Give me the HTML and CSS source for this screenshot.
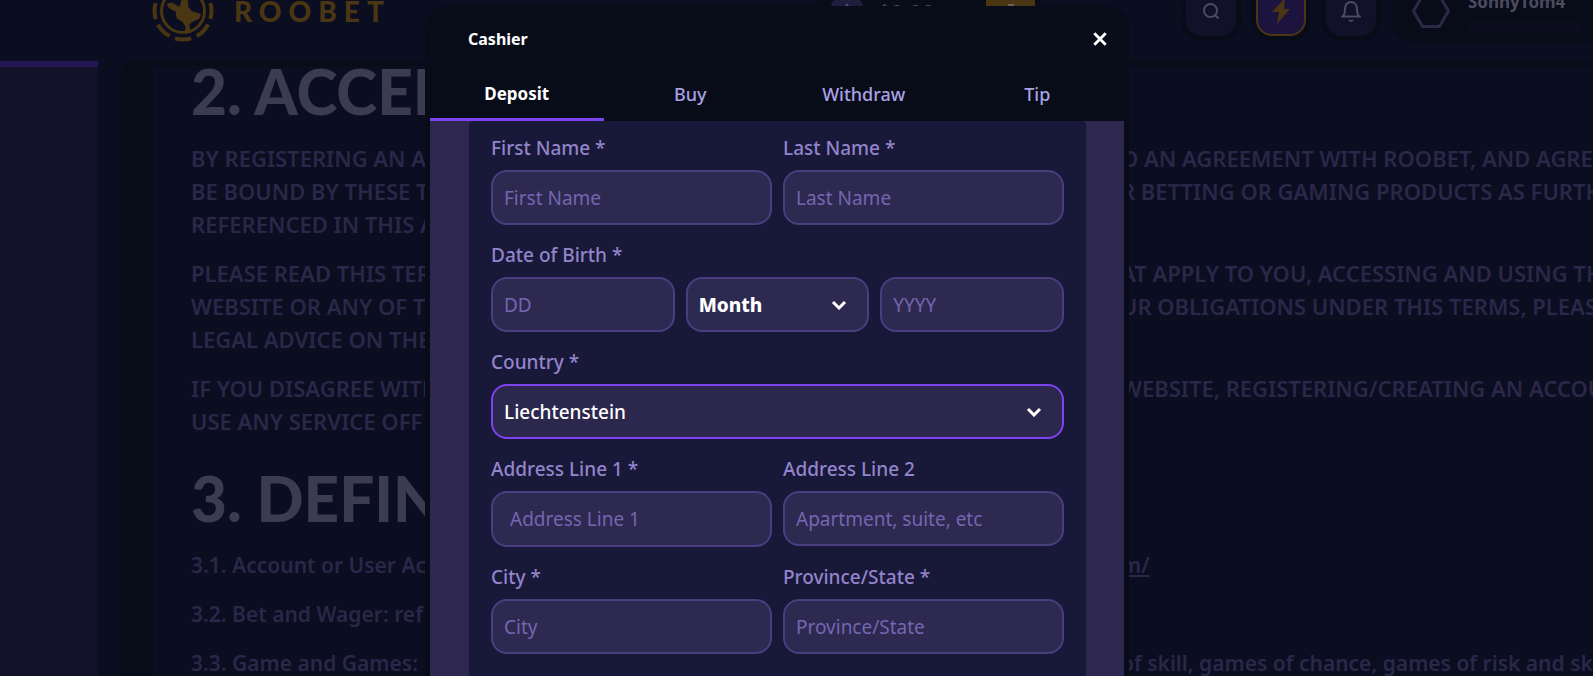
FILE: index.html
```html
<!DOCTYPE html>
<html lang="en">
<head>
<meta charset="utf-8">
<title>Roobet – Cashier</title>
<meta name="viewport" content="width=device-width, initial-scale=1">
<link rel="stylesheet" href="styles.css">
</head>
<body>
<div class="page">
  <header class="topbar">
    <a class="brand" href="#">
      <svg class="brand-mark" viewBox="0 0 64 64" aria-hidden="true">
        <circle cx="32" cy="32" r="28.500" fill="none" stroke="currentColor" stroke-width="4" stroke-dasharray="16.400 5.980" stroke-dashoffset="-14"/>
        <circle cx="32" cy="32" r="21.500" fill="none" stroke="currentColor" stroke-width="3"/>
        <path fill="currentColor" d="M16 25q3-2 6.300-.7l6 3.400L30 22.700q1-4 2.300-5 3-1 4.400 1.600l.6 8.400 3.400 4.300 9 3q0 4-2.400 5.300L40 43.700 38.300 46l1.700 7.500h-6.700l1.400-5.800-3.400-5-5.600-3.400-1-6.600-6.700-3.400z"/>
      </svg>
      <span class="brand-name">ROOBET</span>
    </a>
    <div class="wallet">
      <span class="coin"><svg viewBox="0 0 34 34" aria-hidden="true"><path d="M17 9l6 9-6 4-6-4z" fill="#4c4b60"/></svg></span>
      <span class="balance">$0.00</span>
      <button class="wallet-btn" type="button" aria-label="Open wallet"><svg viewBox="0 0 20 20" aria-hidden="true"><path d="M3 8h14v9H3zM8 8V4h4v4" fill="none" stroke="#6b6353" stroke-width="2"/></svg></button>
    </div>
    <nav class="tools" aria-label="Account">
      <button class="tool" type="button" aria-label="Search"><svg viewBox="0 0 20 20" aria-hidden="true"><circle cx="9.500" cy="9.500" r="6.500"/><path d="M14 14l3.500 3.500"/></svg></button>
      <button class="tool tool-bolt" type="button" aria-label="Rewards"><svg viewBox="0 0 20 26" aria-hidden="true"><path d="M14 0L1 14h7L6 26l13-15h-6z"/></svg></button>
      <button class="tool" type="button" aria-label="Notifications"><svg viewBox="0 0 20 22" aria-hidden="true"><path d="M1.500 16.500c2-1.500 2.500-3 2.500-7.500 0-4 2.500-7 6-7s6 3 6 7c0 4.500.5 6 2.500 7.500zM8 20c1 1.300 3 1.300 4 0"/></svg></button>
    </nav>
    <a class="profile" href="#">
      <svg class="hex" viewBox="0 0 38 34" aria-hidden="true"><path d="M10.500 1.500h17L36.500 17l-9 15.500h-17L1.500 17z"/></svg>
      <span class="who"><span class="name">SonnyTom4</span><span class="level"></span></span>
    </a>
  </header>
  <div class="content">
    <aside class="rail"></aside>
    <main class="doc">
      <article class="terms">
        <h2>2. ACCEP</h2>
        <p><span class="line"><span>BY REGISTERING AN AC</span><span>O AN AGREEMENT WITH ROOBET, AND AGREE</span></span>
        <span class="line"><span>BE BOUND BY THESE T</span><span>R BETTING OR GAMING PRODUCTS AS FURTH</span></span>
        <span class="line"><span>REFERENCED IN THIS A</span></span></p>
        <p><span class="line"><span>PLEASE READ THIS TER</span><span>AT APPLY TO YOU, ACCESSING AND USING TH</span></span>
        <span class="line"><span>WEBSITE OR ANY OF T</span><span>UR OBLIGATIONS UNDER THIS TERMS, PLEASE</span></span>
        <span class="line"><span>LEGAL ADVICE ON THE</span></span></p>
        <p><span class="line"><span>IF YOU DISAGREE WITH</span><span>WEBSITE, REGISTERING/CREATING AN ACCOU</span></span>
        <span class="line"><span>USE ANY SERVICE OFF</span></span></p>
        <h2>3. DEFIN</h2>
        <p class="clause"><span class="line"><span>3.1. Account or User Ac</span><a href="#">m/</a></span></p>
        <p class="clause"><span class="line"><span>3.2. Bet and Wager: ref</span></span></p>
        <p class="clause"><span class="line"><span>3.3. Game and Games:</span><span>of skill, games of chance, games of risk and sk</span></span></p>
      </article>
    </main>
  </div>
</div>

<div class="overlay">
  <section class="modal" role="dialog" aria-label="Cashier">
    <div class="modal-head">
      <h1>Cashier</h1>
      <button class="close" type="button" aria-label="Close"><svg viewBox="0 0 14 14" aria-hidden="true"><path d="M2 2l10 10M12 2L2 12"/></svg></button>
    </div>
    <div class="tabs" role="tablist">
      <button class="tab active" type="button" role="tab" aria-selected="true">Deposit</button>
      <button class="tab" type="button" role="tab" aria-selected="false">Buy</button>
      <button class="tab" type="button" role="tab" aria-selected="false">Withdraw</button>
      <button class="tab" type="button" role="tab" aria-selected="false">Tip</button>
    </div>
    <div class="modal-body">
      <form class="card">
        <div class="row two">
          <div class="field"><label for="first">First Name *</label><input id="first" type="text" placeholder="First Name"></div>
          <div class="field"><label for="last">Last Name *</label><input id="last" type="text" placeholder="Last Name"></div>
        </div>
        <div class="field">
          <label for="day">Date of Birth *</label>
          <div class="row three">
            <input id="day" type="text" placeholder="DD">
            <div class="picker"><select class="strong" aria-label="Month"><option>Month</option></select><svg viewBox="0 0 16 10" aria-hidden="true"><path d="M2 2l6 6 6-6"/></svg></div>
            <input type="text" placeholder="YYYY" aria-label="Year">
          </div>
        </div>
        <div class="field">
          <label for="country">Country *</label>
          <div class="picker"><select id="country" class="focused"><option>Liechtenstein</option></select><svg viewBox="0 0 16 10" aria-hidden="true"><path d="M2 2l6 6 6-6"/></svg></div>
        </div>
        <div class="row two">
          <div class="field"><label for="addr1">Address Line 1 *</label><input id="addr1" class="lookup" type="text" placeholder="Address Line 1"></div>
          <div class="field"><label for="addr2">Address Line 2</label><input id="addr2" type="text" placeholder="Apartment, suite, etc"></div>
        </div>
        <div class="row two">
          <div class="field"><label for="city">City *</label><input id="city" type="text" placeholder="City"></div>
          <div class="field"><label for="state">Province/State *</label><input id="state" type="text" placeholder="Province/State"></div>
        </div>
      </form>
    </div>
  </section>
</div>
</body>
</html>
```
FILE: styles.css
```css
:root {
  --night: #0b0d20;
  --ink: #080b18;
  --panel: #181838;
  --field: #2e2950;
  --field-line: #483e80;
  --violet: #7d43f0;
  --gold: #4a3613;
}
* { box-sizing: border-box; }
html, body { height: 100%; }
body {
  margin: 0;
  overflow: hidden;
  background: var(--night);
  font-family: "Noto Sans", "Open Sans", sans-serif;
}
button, input, select { font: inherit; margin: 0; }
button { border: 0; padding: 0; background: none; color: inherit; }
svg { display: block; }

.page { display: flex; flex-direction: column; height: 100vh; overflow: hidden; }

/* Top bar */
.topbar {
  flex: none;
  display: flex;
  align-items: flex-end;
  height: 61px;
  padding: 0 0 25px 151px;
  overflow: hidden;
}
.brand {
  display: flex;
  align-items: center;
  gap: 19px;
  width: 665px;
  height: 50px;
  color: var(--gold);
  text-decoration: none;
}
.brand-mark { width: 64px; height: 64px; }
.brand-name { font: 900 28px/50px Lato, sans-serif; letter-spacing: 7px; }
.wallet {
  display: flex;
  align-items: center;
  width: 225px;
  height: 50px;
  padding: 0 6px 0 14px;
  gap: 14px;
  border-radius: 16px;
  background: var(--ink);
}
.coin { width: 34px; height: 34px; border-radius: 50%; background: #211c3d; }
.balance { flex: 1; font-size: 22px; font-weight: 700; color: #4c4b60; }
.wallet-btn { display: grid; place-items: center; width: 49px; height: 50px; background: var(--gold); }
.wallet-btn svg { width: 20px; height: 20px; }
.tools { display: flex; gap: 20px; margin-left: auto; }
.tool {
  display: grid;
  place-items: center;
  width: 50px;
  height: 50px;
  border-radius: 16px;
  background: #12112a;
  box-shadow: 0 0 0 5px var(--ink);
}
.tool svg { width: 20px; height: 22px; fill: none; stroke: #4c4b60; stroke-width: 2; }
.tool-bolt { border: 2px solid var(--gold); background: #1c143f; }
.tool-bolt svg { width: 20px; height: 26px; fill: var(--gold); stroke: none; }
.profile {
  display: flex;
  align-items: center;
  gap: 18px;
  width: 201px;
  height: 62px;
  margin: 0 0 -6px 16px;
  padding-left: 20px;
  border-radius: 20px 0 0 20px;
  background: var(--ink);
  text-decoration: none;
}
.hex { flex: none; width: 38px; height: 34px; fill: none; stroke: #2b2848; stroke-width: 3; }
.who { display: flex; flex-direction: column; gap: 8px; width: 114px; }
.name { font-size: 17px; line-height: 24px; font-weight: 700; color: #4c4b60; }
.level { height: 11px; border-radius: 6px; background: #0c0e20; }

/* Terms page */
.content { flex: 1; display: flex; gap: 22px; min-height: 0; }
.rail { flex: none; width: 98px; border-top: 6px solid #241653; background: #12112a; }
.doc {
  flex: 1;
  min-width: 0;
  padding: 5px 0 0 33px;
  border-radius: 14px 0 0 0;
  background: var(--ink);
  overflow: hidden;
}
.terms { height: 100%; padding-left: 38px; background: var(--night); overflow: hidden; }
.terms h2 { margin: 0; font: 900 62px/50px Lato, sans-serif; color: #3c3c50; }
.terms p { margin: 26px 0 16px; font-size: 22px; line-height: 33px; font-weight: 600; color: #2a2748; }
.terms p + p { margin-top: 0; }
.terms p + h2 { margin-top: 35px; }
.terms .clause { font-size: 21px; }
.line { display: grid; grid-template-columns: 930px 1fr; white-space: nowrap; }
.line a { color: inherit; }

/* Cashier dialog */
.overlay { position: absolute; inset: 0; display: flex; padding: 6px 464px 0 425px; overflow: hidden; }
.modal {
  flex: 1;
  min-width: 0;
  display: flex;
  flex-direction: column;
  padding: 5px 5px 0;
  border-radius: 24px 24px 0 0;
  background: var(--ink);
}
.modal-head { display: flex; align-items: center; justify-content: space-between; height: 56px; padding: 0 16px 0 38px; }
.modal-head h1 { margin: 0; font-size: 16px; font-weight: 700; color: #fff; }
.close svg { width: 16px; height: 16px; fill: none; stroke: #fff; stroke-width: 2.5; }
.tabs { display: flex; height: 54px; }
.tab { flex: 1; padding-top: 2px; border-bottom: 3px solid transparent; font-size: 18px; font-weight: 500; color: #a9a2e4; }
.tab.active { border-color: var(--violet); font-size: 17px; font-weight: 700; color: #fff; }
.modal-body { flex: 1; min-height: 0; padding: 0 38px 0 39px; background: #2e2850; overflow: hidden; }
.card {
  display: flex;
  flex-direction: column;
  gap: 16px;
  min-height: 100%;
  padding: 13px 22px;
  border-radius: 4px 4px 0 0;
  background: var(--panel);
}
.row { display: grid; gap: 11px; align-items: start; }
.two { grid-template-columns: 1fr 1fr; }
.three { grid-template-columns: 1fr 1fr 1fr; }
.field { display: flex; flex-direction: column; gap: 8px; min-width: 0; }
.field label { font-size: 19px; line-height: 28px; font-weight: 500; color: #9384cc; }
.field input, .field select {
  width: 100%;
  height: 55px;
  padding: 0 11px;
  border: 2px solid var(--field-line);
  border-radius: 16px;
  outline: 0;
  appearance: none;
  background: var(--field);
  font-size: 19px;
  font-weight: 500;
  color: #fff;
}
.field input { font-weight: 400; }
.field input::placeholder { color: #7466b0; opacity: 1; }
.field .lookup { height: 56px; padding-left: 17px; }
.field .focused { border-color: var(--violet); background: #2c274d; }
.field .strong { font-weight: 800; }
.picker { display: grid; align-items: center; }
.picker select, .picker svg { grid-area: 1 / 1; }
.picker svg { justify-self: end; width: 16px; height: 10px; margin-right: 22px; fill: none; stroke: #fff; stroke-width: 3; pointer-events: none; }
```
